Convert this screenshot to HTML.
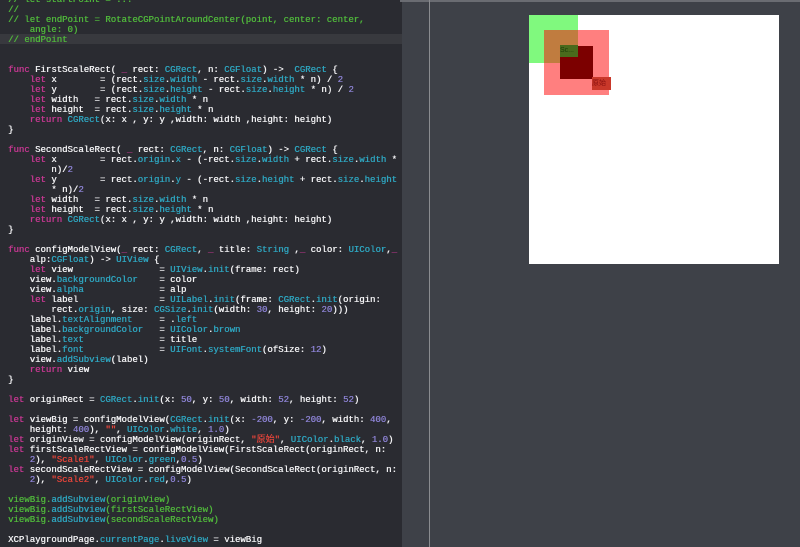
<!DOCTYPE html>
<html><head><meta charset="utf-8"><style>
body{margin:0;width:800px;height:547px;overflow:hidden;background:#3e4148;position:relative;font-family:"Liberation Mono","Noto Sans CJK SC",monospace}
#ed{position:absolute;left:0;top:0;width:402px;height:547px;background:#2a2b31;overflow:hidden}
.l{position:absolute;left:8px;margin-top:1px;white-space:pre;font-size:9px;line-height:10px;color:#f0f0f2;text-shadow:0.35px 0 0 currentColor}
.c{color:#4fb53b}.k{color:#c2378f}.t{color:#2ea3bd}.n{color:#8a80d0}.s{color:#e2443a}
#hl{position:absolute;left:0;top:34px;width:402px;height:10px;background:#38393e}
</style></head><body>
<div id="ed">
<div id="hl"></div>
<div class="l c" style="top:-6px">// let startPoint = ...</div>
<div class="l c" style="top:4px">//</div>
<div class="l c" style="top:14px">// let endPoint = RotateCGPointAroundCenter(point, center: center,</div>
<div class="l c" style="top:24px">    angle: 0)</div>
<div class="l c" style="top:34px">// endPoint</div>
<div class="l" style="top:64px"><span class="k">func</span> FirstScaleRect( <span class="k">_</span> rect: <span class="t">CGRect</span>, n: <span class="t">CGFloat</span>) ->  <span class="t">CGRect</span> {</div>
<div class="l" style="top:74px">    <span class="k">let</span> x        = (rect.<span class="t">size</span>.<span class="t">width</span> - rect.<span class="t">size</span>.<span class="t">width</span> * n) / <span class="n">2</span></div>
<div class="l" style="top:84px">    <span class="k">let</span> y        = (rect.<span class="t">size</span>.<span class="t">height</span> - rect.<span class="t">size</span>.<span class="t">height</span> * n) / <span class="n">2</span></div>
<div class="l" style="top:94px">    <span class="k">let</span> width   = rect.<span class="t">size</span>.<span class="t">width</span> * n</div>
<div class="l" style="top:104px">    <span class="k">let</span> height  = rect.<span class="t">size</span>.<span class="t">height</span> * n</div>
<div class="l" style="top:114px">    <span class="k">return</span> <span class="t">CGRect</span>(x: x , y: y ,width: width ,height: height)</div>
<div class="l" style="top:124px">}</div>
<div class="l" style="top:144px"><span class="k">func</span> SecondScaleRect( <span class="k">_</span> rect: <span class="t">CGRect</span>, n: <span class="t">CGFloat</span>) -> <span class="t">CGRect</span> {</div>
<div class="l" style="top:154px">    <span class="k">let</span> x        = rect.<span class="t">origin</span>.<span class="t">x</span> - (-rect.<span class="t">size</span>.<span class="t">width</span> + rect.<span class="t">size</span>.<span class="t">width</span> *</div>
<div class="l" style="top:164px">        n)/<span class="n">2</span></div>
<div class="l" style="top:174px">    <span class="k">let</span> y        = rect.<span class="t">origin</span>.<span class="t">y</span> - (-rect.<span class="t">size</span>.<span class="t">height</span> + rect.<span class="t">size</span>.<span class="t">height</span></div>
<div class="l" style="top:184px">        * n)/<span class="n">2</span></div>
<div class="l" style="top:194px">    <span class="k">let</span> width   = rect.<span class="t">size</span>.<span class="t">width</span> * n</div>
<div class="l" style="top:204px">    <span class="k">let</span> height  = rect.<span class="t">size</span>.<span class="t">height</span> * n</div>
<div class="l" style="top:214px">    <span class="k">return</span> <span class="t">CGRect</span>(x: x , y: y ,width: width ,height: height)</div>
<div class="l" style="top:224px">}</div>
<div class="l" style="top:244px"><span class="k">func</span> configModelView(<span class="k">_</span> rect: <span class="t">CGRect</span>, <span class="k">_</span> title: <span class="t">String</span> ,<span class="k">_</span> color: <span class="t">UIColor</span>,<span class="k">_</span></div>
<div class="l" style="top:254px">    alp:<span class="t">CGFloat</span>) -> <span class="t">UIView</span> {</div>
<div class="l" style="top:264px">    <span class="k">let</span> view                = <span class="t">UIView</span>.<span class="t">init</span>(frame: rect)</div>
<div class="l" style="top:274px">    view.<span class="t">backgroundColor</span>    = color</div>
<div class="l" style="top:284px">    view.<span class="t">alpha</span>              = alp</div>
<div class="l" style="top:294px">    <span class="k">let</span> label               = <span class="t">UILabel</span>.<span class="t">init</span>(frame: <span class="t">CGRect</span>.<span class="t">init</span>(origin:</div>
<div class="l" style="top:304px">        rect.<span class="t">origin</span>, size: <span class="t">CGSize</span>.<span class="t">init</span>(width: <span class="n">30</span>, height: <span class="n">20</span>)))</div>
<div class="l" style="top:314px">    label.<span class="t">textAlignment</span>     = .<span class="t">left</span></div>
<div class="l" style="top:324px">    label.<span class="t">backgroundColor</span>   = <span class="t">UIColor</span>.<span class="t">brown</span></div>
<div class="l" style="top:334px">    label.<span class="t">text</span>              = title</div>
<div class="l" style="top:344px">    label.<span class="t">font</span>              = <span class="t">UIFont</span>.<span class="t">systemFont</span>(ofSize: <span class="n">12</span>)</div>
<div class="l" style="top:354px">    view.<span class="t">addSubview</span>(label)</div>
<div class="l" style="top:364px">    <span class="k">return</span> view</div>
<div class="l" style="top:374px">}</div>
<div class="l" style="top:394px"><span class="k">let</span> originRect = <span class="t">CGRect</span>.<span class="t">init</span>(x: <span class="n">50</span>, y: <span class="n">50</span>, width: <span class="n">52</span>, height: <span class="n">52</span>)</div>
<div class="l" style="top:414px"><span class="k">let</span> viewBig = configModelView(<span class="t">CGRect</span>.<span class="t">init</span>(x: <span class="n">-200</span>, y: <span class="n">-200</span>, width: <span class="n">400</span>,</div>
<div class="l" style="top:424px">    height: <span class="n">400</span>), <span class="s">""</span>, <span class="t">UIColor</span>.<span class="t">white</span>, <span class="n">1.0</span>)</div>
<div class="l" style="top:434px"><span class="k">let</span> originView = configModelView(originRect, <span class="s">"原始"</span>, <span class="t">UIColor</span>.<span class="t">black</span>, <span class="n">1.0</span>)</div>
<div class="l" style="top:444px"><span class="k">let</span> firstScaleRectView = configModelView(FirstScaleRect(originRect, n:</div>
<div class="l" style="top:454px">    <span class="n">2</span>), <span class="s">"Scale1"</span>, <span class="t">UIColor</span>.<span class="t">green</span>,<span class="n">0.5</span>)</div>
<div class="l" style="top:464px"><span class="k">let</span> secondScaleRectView = configModelView(SecondScaleRect(originRect, n:</div>
<div class="l" style="top:474px">    <span class="n">2</span>), <span class="s">"Scale2"</span>, <span class="t">UIColor</span>.<span class="t">red</span>,<span class="n">0.5</span>)</div>
<div class="l c" style="top:494px">viewBig.<span class="t">addSubview</span>(originView)</div>
<div class="l c" style="top:504px">viewBig.<span class="t">addSubview</span>(firstScaleRectView)</div>
<div class="l c" style="top:514px">viewBig.<span class="t">addSubview</span>(secondScaleRectView)</div>
<div class="l" style="top:534px">XCPlaygroundPage.<span class="t">currentPage</span>.<span class="t">liveView</span> = viewBig</div>
</div>
<div style="position:absolute;left:400px;top:0;width:400px;height:2px;background:#6a6c72"></div>
<div style="position:absolute;left:429px;top:0;width:1px;height:547px;background:#8a8c90"></div>
<div style="position:absolute;left:529px;top:15px;width:250px;height:249px;background:#fff"></div>
<div style="position:absolute;left:529px;top:15px;width:49px;height:48px;background:#80f97e"></div>
<div style="position:absolute;left:544px;top:30px;width:65px;height:65px;background:rgba(255,0,0,.5)"></div>
<div style="position:absolute;left:560px;top:46px;width:33px;height:33px;background:#7c0000"></div>
<div style="position:absolute;left:560px;top:45px;width:18px;height:12px;background:#4a6a1c;font:7px 'Liberation Sans',sans-serif;color:#1d3a0a;line-height:12px">Sc...</div>
<div style="position:absolute;left:592px;top:77px;width:19px;height:13px;background:#c9382a;font:7px 'Liberation Sans','Noto Sans CJK SC',sans-serif;color:#8a1010;line-height:13px">原始</div>
</body></html>
